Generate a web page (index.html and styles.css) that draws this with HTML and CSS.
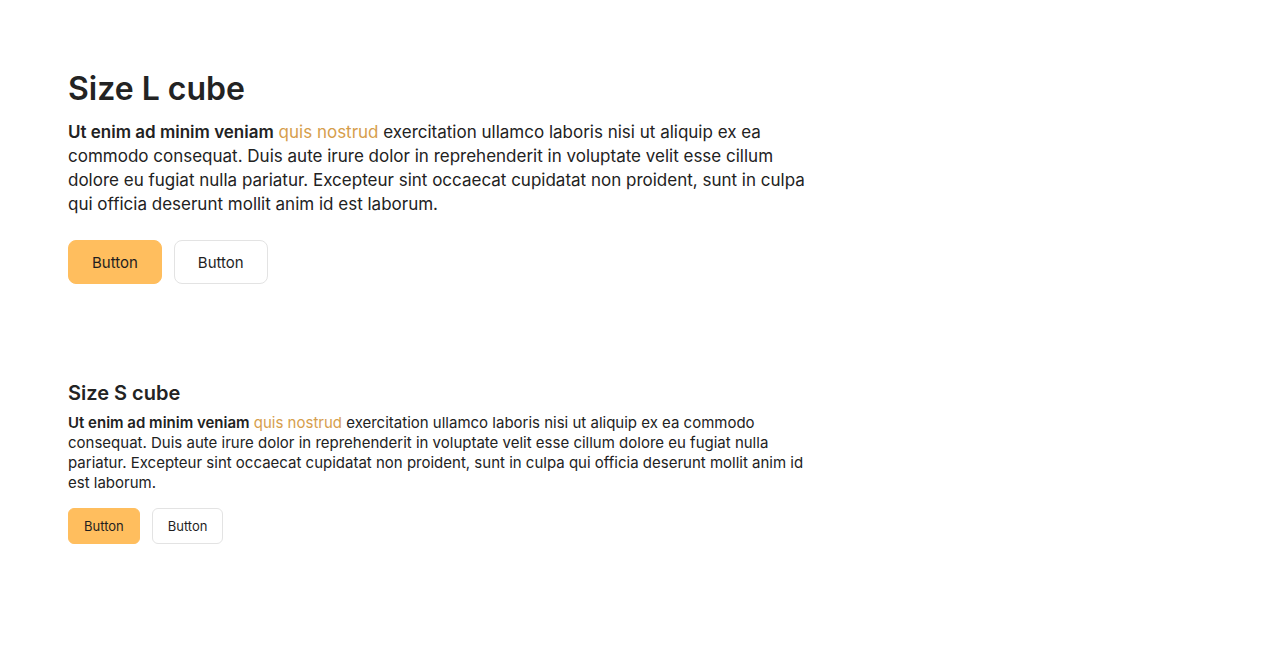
FILE: index.html
```html
<!DOCTYPE html>
<html>
<head>
<meta charset="utf-8">
<link rel="stylesheet" href="styles.css">
</head>
<body>
<main class="page">
  <section class="cube cube-l">
    <h1 class="title">Size L cube</h1>
    <p class="text"><strong>Ut enim ad minim veniam</strong> <a class="link">quis nostrud</a> exercitation ullamco laboris nisi ut aliquip ex ea commodo consequat. Duis aute irure dolor in reprehenderit in voluptate velit esse cillum dolore eu fugiat nulla pariatur. Excepteur sint occaecat cupidatat non proident, sunt in culpa qui officia deserunt mollit anim id est laborum.</p>
    <div class="actions">
      <button class="btn btn-primary">Button</button>
      <button class="btn btn-secondary">Button</button>
    </div>
  </section>
  <section class="cube cube-s">
    <h2 class="title">Size S cube</h2>
    <p class="text"><strong>Ut enim ad minim veniam</strong> <a class="link">quis nostrud</a> exercitation ullamco laboris nisi ut aliquip ex ea commodo consequat. Duis aute irure dolor in reprehenderit in voluptate velit esse cillum dolore eu fugiat nulla pariatur. Excepteur sint occaecat cupidatat non proident, sunt in culpa qui officia deserunt mollit anim id est laborum.</p>
    <div class="actions">
      <button class="btn btn-primary">Button</button>
      <button class="btn btn-secondary">Button</button>
    </div>
  </section>
</main>
</body>
</html>
```
FILE: styles.css
```css
* { box-sizing: border-box; }
body {
  margin: 0;
  background: #fff;
  font-family: Inter, "Noto Sans", sans-serif;
  color: #222;
}
.page {
  padding: 69px 68px;
  display: flex;
  flex-direction: column;
  gap: 95px;
}
.cube { max-width: 752px; }
.title { margin: 0; font-weight: 600; color: #232323; }
.text { margin: 0; color: #222; }
.text strong { font-weight: 600; }
.link { color: #D69E4C; text-decoration: none; }
.actions { display: flex; gap: 12px; }
.btn {
  font-family: inherit;
  color: #1f1f1f;
  border-radius: 8px;
  border: 1px solid transparent;
  cursor: pointer;
}
.btn-primary { background: #FFBE5E; border-color: #FFBE5E; }
.btn-secondary { background: #fff; border-color: #e3e3e3; }

.cube-l .title { font-size: 32px; line-height: 40px; margin-bottom: 11px; }
.cube-l .text { font-size: 17px; line-height: 24px; margin-bottom: 24px; }
.cube-l .btn { font-size: 15px; height: 44px; padding: 0 23px; }

.cube-s .title { font-size: 20px; line-height: 28px; margin-bottom: 6px; }
.cube-s .text { font-size: 15px; line-height: 20px; margin-bottom: 15px; }
.cube-s .btn { font-size: 13px; height: 36px; padding: 0 15px; border-radius: 6px; }
```
